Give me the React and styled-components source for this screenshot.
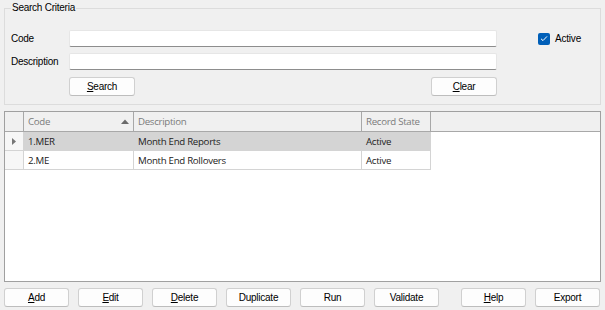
import React from 'react';
import styled, { createGlobalStyle } from 'styled-components';

const GlobalStyle = createGlobalStyle`
  html, body {
    margin: 0;
    padding: 0;
    background: #f0f0f0;
  }
  body {
    font-family: "Liberation Sans", Arial, sans-serif;
    font-size: 10px;
    color: #000;
  }
`

const Page = styled.div`
  width: 605px;
  height: 310px;
  box-sizing: border-box;
  padding: 2px 4px 0 4px;
  display: flex;
  flex-direction: column;
`

const GroupBox = styled.fieldset`
  margin: 0;
  padding: 0 6px 7px 6px;
  border: 1px solid #dcdcdc;
  height: 103px;
  box-sizing: border-box;
  min-width: 0;
`

const Legend = styled.legend`
  padding: 0 1px;
  margin-left: 0;
  font-size: 10px;
  line-height: 12px;
  letter-spacing: -0.25px;
`

const FormGrid = styled.div`
  display: grid;
  grid-template-columns: 58px 428px 1fr;
  grid-auto-rows: 17px;
  row-gap: 6px;
  margin-top: 16px;
  align-items: center;
`

const Label = styled.label`
  font-size: 10px;
  letter-spacing: -0.25px;
`

const TextBox = styled.input`
  box-sizing: border-box;
  height: 17px;
  width: 100%;
  margin: 0;
  border: 1px solid #e6e6e6;
  border-bottom: 1px solid #8d8d8d;
  border-radius: 2px;
  background: #fff;
  outline: none;
`

const CheckWrap = styled.label`
  display: flex;
  align-items: center;
  gap: 5px;
  margin-left: 41px;
  font-size: 10px;
  letter-spacing: -0.2px;
`

const CheckBox = styled.span`
  width: 12px;
  height: 12px;
  border-radius: 2px;
  background: #005fb8;
  display: flex;
  align-items: center;
  justify-content: center;
`

const ButtonRow = styled.div`
  grid-column: 2;
  display: flex;
  justify-content: space-between;
  align-self: start;
  margin-top: 1px;
`

const Button = styled.button`
  box-sizing: border-box;
  flex-shrink: 0;
  width: 66px;
  height: 19px;
  margin: 0;
  margin-left: ${p => p.$push || 0}px;
  padding: 0;
  background: #fdfdfd;
  border: 1px solid #d0d0d0;
  border-bottom-color: #bdbdbd;
  border-radius: 3px;
  font-family: "Liberation Sans", Arial, sans-serif;
  font-size: 10px;
  letter-spacing: -0.25px;
  color: #000;
  u { text-decoration-thickness: 1px; text-underline-offset: 1px; }
`

const Grid = styled.div`
  margin-top: 6px;
  height: 171px;
  box-sizing: border-box;
  border: 1px solid #a0a0a0;
  background: #fff;
  display: flex;
  flex-direction: column;
`

const GridRow = styled.div`
  display: grid;
  grid-template-columns: 19px 110px 228px 69px ${p => (p.$header ? '1fr' : '')};
  height: ${p => (p.$header ? 20 : 19)}px;
  box-sizing: border-box;
  background: ${p => (p.$header ? '#f0f0f0' : 'transparent')};
  border-bottom: ${p => (p.$header ? '1px solid #a8a8a8' : 'none')};
`

const Cell = styled.div`
  box-sizing: border-box;
  border-right: ${p => (p.$last ? 'none' : `1px solid ${p.$header ? '#a8a8a8' : '#d4d4d4'}`)};
  border-bottom: ${p => (p.$header ? 'none' : '1px solid #d4d4d4')};
  background: ${p => (p.$indicator ? '#f7f7f7' : p.$selected ? '#d4d4d4' : 'transparent')};
  padding: 0 4px;
  display: flex;
  align-items: center;
  justify-content: ${p => (p.$indicator ? 'center' : 'space-between')};
  font-family: "Open Sans", "Noto Sans", sans-serif;
  font-size: 9.7px;
  letter-spacing: -0.3px;
  color: ${p => (p.$header ? '#7b7b7b' : '#222')};
  white-space: nowrap;
  overflow: hidden;
`

const Footer = styled.div`
  margin-top: 6px;
  display: flex;
  gap: 9px;

  ${Button} { width: 65px; }
`

const SortArrow = () => (
  <svg width="8" height="5" viewBox="0 0 8 5">
    <polygon points="0,5 4,0.5 8,5" fill="#6a6a6a" />
  </svg>
)

const RowArrow = () => (
  <svg width="4" height="7" viewBox="0 0 4 7">
    <polygon points="0,0 4,3.5 0,7" fill="#777" />
  </svg>
)

const rows = [
  { code: '1.MER', description: 'Month End Reports', state: 'Active' },
  { code: '2.ME', description: 'Month End Rollovers', state: 'Active' },
]

const App = () => {
  return (
    <>
      <GlobalStyle />
      <Page>
        <GroupBox>
          <Legend>Search Criteria</Legend>
          <FormGrid>
            <Label>Code</Label>
            <TextBox />
            <CheckWrap>
              <CheckBox>
                <svg width="8" height="7" viewBox="0 0 8 7">
                  <polyline points="1,3.8 3,5.6 7,1.4" fill="none" stroke="#fff" strokeWidth="1" />
                </svg>
              </CheckBox>
              Active
            </CheckWrap>
            <Label>Description</Label>
            <TextBox />
            <div />
            <ButtonRow>
              <Button><u>S</u>earch</Button>
              <Button><u>C</u>lear</Button>
            </ButtonRow>
          </FormGrid>
        </GroupBox>

        <Grid>
          <GridRow $header>
            <Cell $header />
            <Cell $header>Code<SortArrow /></Cell>
            <Cell $header>Description</Cell>
            <Cell $header>Record State</Cell>
            <Cell $header $last />
          </GridRow>
          {rows.map((r, i) => (
            <GridRow key={r.code}>
              <Cell $indicator>{i === 0 && <RowArrow />}</Cell>
              <Cell $selected={i === 0}>{r.code}</Cell>
              <Cell $selected={i === 0}>{r.description}</Cell>
              <Cell $selected={i === 0}>{r.state}</Cell>
            </GridRow>
          ))}
        </Grid>

        <Footer>
          <Button><u>A</u>dd</Button>
          <Button><u>E</u>dit</Button>
          <Button><u>D</u>elete</Button>
          <Button>Duplicate</Button>
          <Button>Run</Button>
          <Button>Validate</Button>
          <Button $push={13}><u>H</u>elp</Button>
          <Button>Export</Button>
        </Footer>
      </Page>
    </>
  )
}

export default App
